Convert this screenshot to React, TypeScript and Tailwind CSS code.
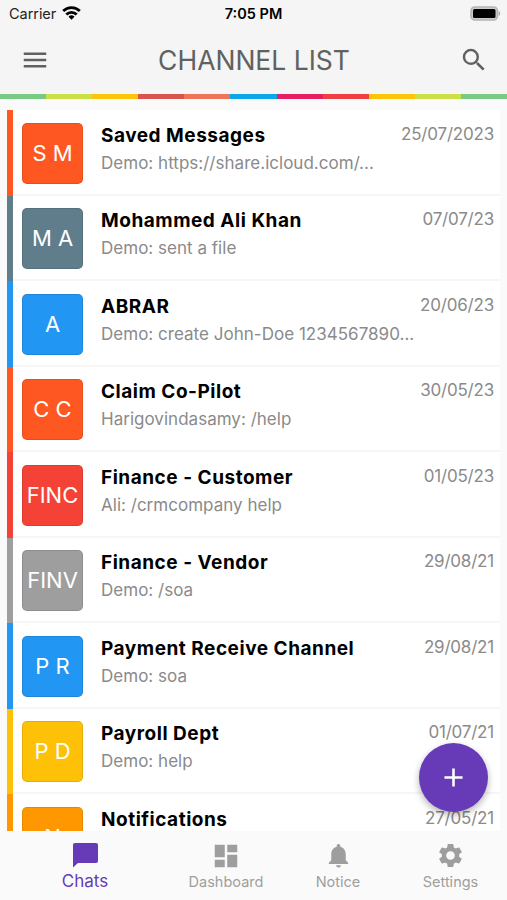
import {
  MdAdd,
  MdDashboard,
  MdMenu,
  MdNotifications,
  MdSearch,
  MdSettings,
} from "react-icons/md";

interface Channel {
  initials: string;
  name: string;
  message?: string;
  date: string;
  color: string;
}

const channels: Channel[] = [
  { initials: "S M", name: "Saved Messages", message: "Demo: https://share.icloud.com/...", date: "25/07/2023", color: "bg-[#ff5722]" },
  { initials: "M A", name: "Mohammed Ali Khan", message: "Demo: sent a file", date: "07/07/23", color: "bg-[#607d8b]" },
  { initials: "A", name: "ABRAR", message: "Demo: create John-Doe 1234567890...", date: "20/06/23", color: "bg-[#2196f3]" },
  { initials: "C C", name: "Claim Co-Pilot", message: "Harigovindasamy: /help", date: "30/05/23", color: "bg-[#ff5722]" },
  { initials: "FINC", name: "Finance - Customer", message: "Ali: /crmcompany help", date: "01/05/23", color: "bg-[#f44336]" },
  { initials: "FINV", name: "Finance - Vendor", message: "Demo: /soa", date: "29/08/21", color: "bg-[#9e9e9e]" },
  { initials: "P R", name: "Payment Receive Channel", message: "Demo: soa", date: "29/08/21", color: "bg-[#2196f3]" },
  { initials: "P D", name: "Payroll Dept", message: "Demo: help", date: "01/07/21", color: "bg-[#ffc107]" },
  { initials: "N", name: "Notifications", date: "27/05/21", color: "bg-[#ff9800]" },
];

const stripe = [
  "bg-[#78c984]",
  "bg-[#cbdf46]",
  "bg-[#fcc50c]",
  "bg-[#d8544c]",
  "bg-[#ef7558]",
  "bg-[#0ca7e8]",
  "bg-[#e61e62]",
  "bg-[#ee3f43]",
  "bg-[#fcc50c]",
  "bg-[#cbdf46]",
  "bg-[#78c984]",
];

function StatusBar() {
  return (
    <div className="grid h-7 grid-cols-3 items-center pl-[9px] pr-[7px] text-[14.5px] text-[#222]">
      <div className="flex items-center gap-[6px]">
        <span className="tracking-[-0.05px]">Carrier</span>
        <svg className="-mt-[2px]" width="19" height="14" viewBox="0 0 19 14" fill="none" stroke="#000" strokeWidth="2.8">
          <path d="M1.2 5.1a11.7 11.7 0 0 1 16.6 0" />
          <path d="M4.3 8.5a7.3 7.3 0 0 1 10.4 0" />
          <path d="M9.5 13.8 6.5 10.7a4.3 4.3 0 0 1 6 0Z" fill="#000" stroke="none" />
        </svg>
      </div>
      <span className="pr-[2px] text-center font-semibold text-black">7:05 PM</span>
      <svg className="-mr-px -mt-[2px] justify-self-end" width="31" height="15" viewBox="0 0 31 15">
        <rect x="1" y="1" width="26.5" height="13" rx="4" fill="#ccc" stroke="#b4b4b4" strokeWidth="1.6" />
        <rect x="3" y="3" width="22.5" height="9" rx="1.5" fill="#000" />
        <path d="M28.7 5c2 .7 2 4.3 0 5Z" fill="#aaa" />
      </svg>
    </div>
  );
}

function ChannelRow({ channel }: { channel: Channel }) {
  return (
    <li className="flex h-[85.5px] shrink-0">
      <div className={`w-[6px] shrink-0 ${channel.color}`} />
      <div className="flex min-w-0 flex-1 border-b-2 border-[#f6f6f6] bg-white pl-[9px] pr-[6px] pt-[12.5px]">
        <div
          className={`flex size-[61px] shrink-0 items-center justify-center rounded-[5px] border border-black/10 text-[22px] text-white ${channel.color}`}
        >
          {channel.initials}
        </div>
        <div className="ml-[18px] min-w-0 flex-1">
          <div className="flex justify-between whitespace-nowrap">
            <span className="text-[19px] font-bold leading-[25px] tracking-[0.52px] text-black">{channel.name}</span>
            <span className="text-[17px] leading-[22px] tracking-[-0.2px] text-[#8a8a8a]">{channel.date}</span>
          </div>
          {channel.message && (
            <p className="whitespace-nowrap text-[17px] leading-[30px] tracking-[0.02px] text-[#8a8a8a]">{channel.message}</p>
          )}
        </div>
      </div>
    </li>
  );
}

function BottomNav() {
  return (
    <nav className="grid h-[69px] shrink-0 grid-cols-[170px_112px_112px_113px] bg-[#fafafa] text-[14.5px] text-[#9e9e9e]">
      <div className="flex flex-col items-center pt-[12px] text-[17px] text-[#673ab7]">
        <svg width="25" height="25" viewBox="0 0 25 25" fill="currentColor">
          <path d="M2 0h21a2 2 0 0 1 2 2v16a2 2 0 0 1-2 2H5l-5 4.5V2a2 2 0 0 1 2-2Z" />
        </svg>
        <span className="leading-[26px]">Chats</span>
      </div>
      <div className="flex flex-col items-center pt-[10px]">
        <MdDashboard size={30} />
        <span className="leading-[22px]">Dashboard</span>
      </div>
      <div className="flex flex-col items-center pt-[10px]">
        <MdNotifications size={29} />
        <span className="leading-[24px]">Notice</span>
      </div>
      <div className="flex flex-col items-center pt-[10px]">
        <MdSettings size={29} />
        <span className="leading-[24px]">Settings</span>
      </div>
    </nav>
  );
}

export default function App() {
  return (
    <div className="relative flex h-[900px] w-[507px] flex-col overflow-hidden bg-[#fafafa] font-['Inter',sans-serif]">
      <header className="shrink-0 bg-[#f5f5f5]">
        <StatusBar />
        <div className="flex h-[66px] items-center justify-between pl-[20px] pr-[18px] text-[#616161]">
          <MdMenu size={30} className="mb-[2px]" />
          <h1 className="pr-px text-[26.5px]">CHANNEL LIST</h1>
          <MdSearch size={30} className="mb-[3px]" />
        </div>
        <div className="flex h-[5px]">
          {stripe.map((color, i) => (
            <div key={i} className={`flex-1 ${color}`} />
          ))}
        </div>
      </header>

      <ul className="flex min-h-0 flex-1 flex-col overflow-hidden pl-[7px] pr-[7px] pt-[11.4px]">
        {channels.map((channel) => (
          <ChannelRow key={channel.name} channel={channel} />
        ))}
      </ul>

      <BottomNav />

      {/* new chat */}
      <button className="absolute left-[419px] top-[743px] flex size-[69px] items-center justify-center rounded-full bg-[#673ab7] text-white shadow-[0_3px_7px_rgba(0,0,0,0.3)]">
        <MdAdd size={31} />
      </button>
    </div>
  );
}
